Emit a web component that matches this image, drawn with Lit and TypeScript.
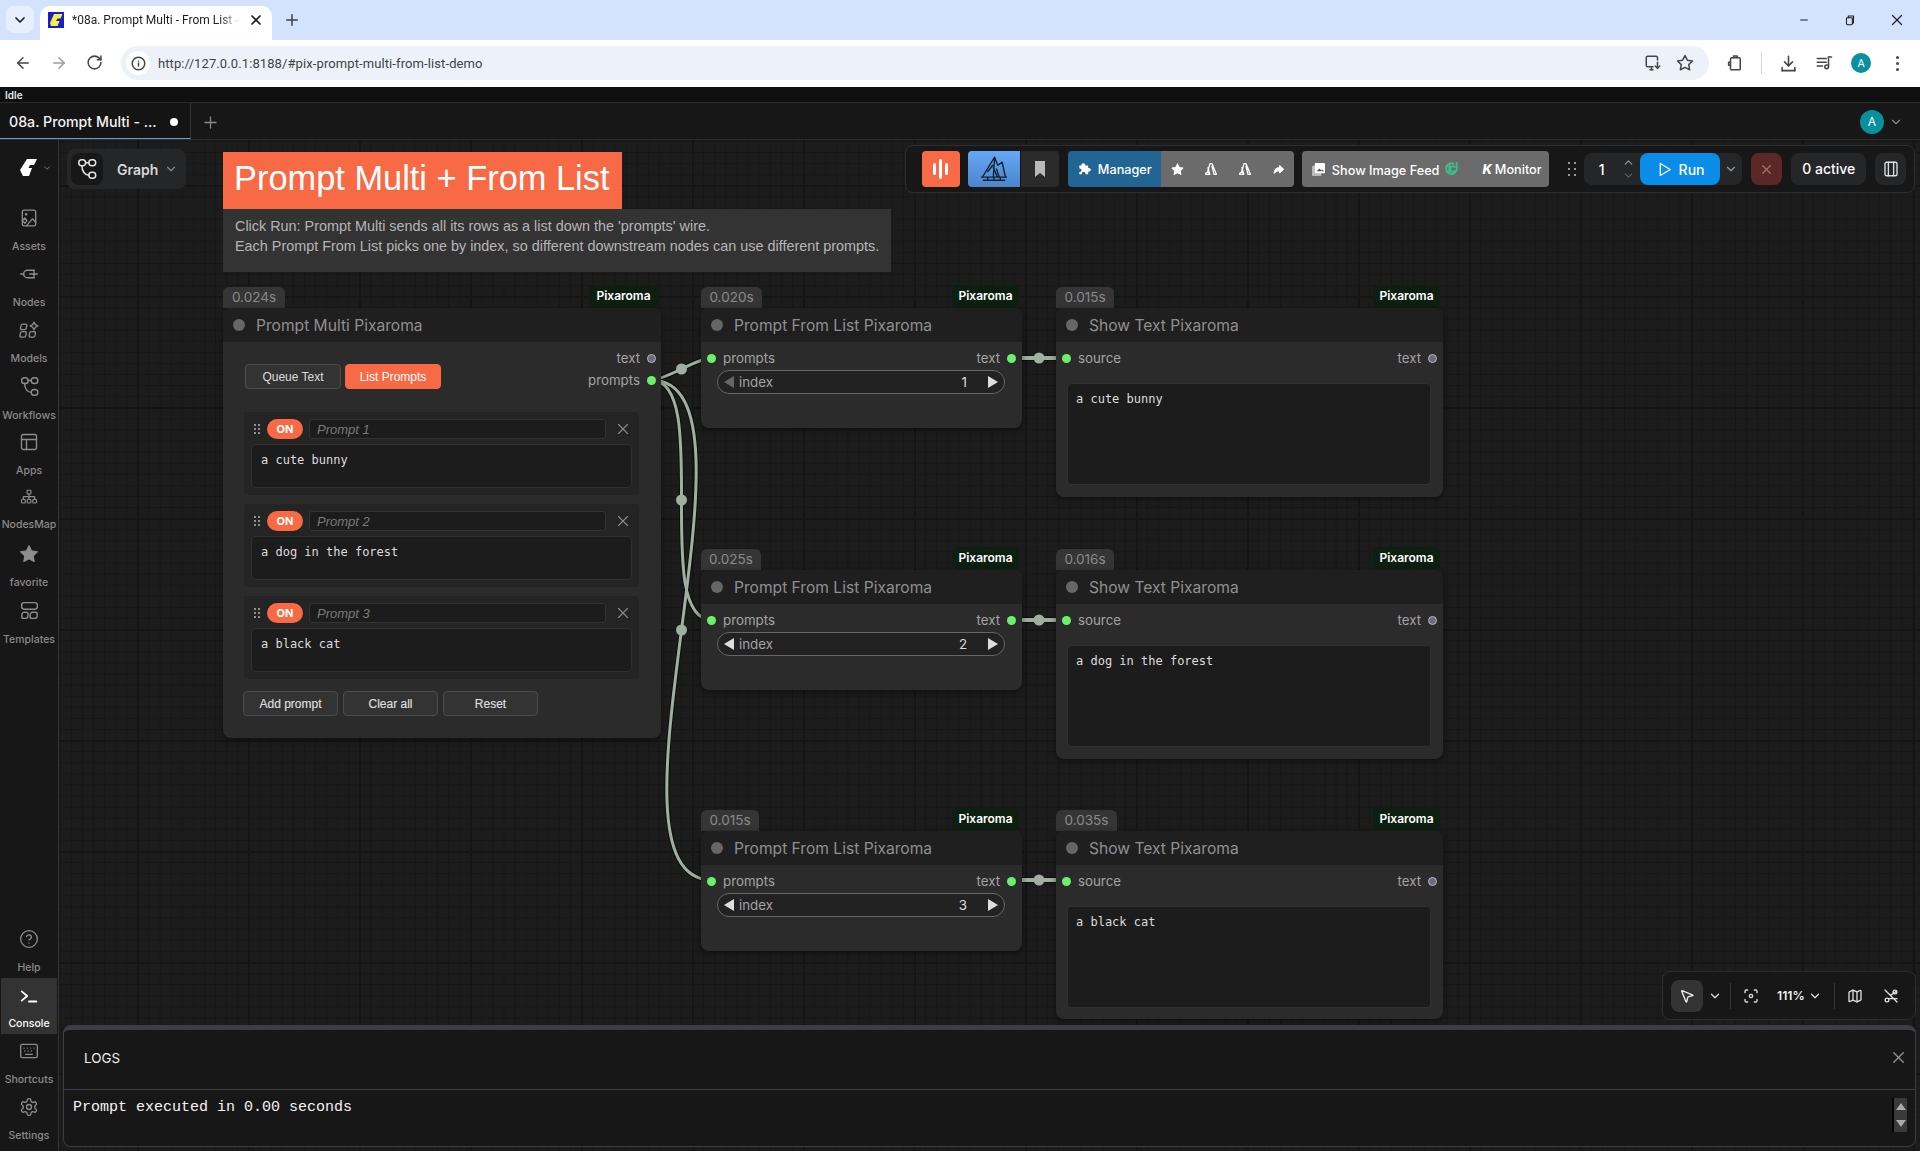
import { LitElement, css, html, svg, type TemplateResult } from 'lit';
import { customElement } from 'lit/decorators.js';

// simple stroke icon, shapes are given in a 24x24 box
function icon(
  body: TemplateResult | string[],
  size = 20,
  color = 'currentColor',
  sw = 2,
  fill = 'none'
): TemplateResult {
  const inner = Array.isArray(body) ? body.map((d) => svg`<path d=${d} />`) : body;
  return html`<svg
    class="ic"
    width=${size}
    height=${size}
    viewBox="0 0 24 24"
    fill=${fill}
    stroke=${color}
    stroke-width=${sw}
    stroke-linecap="round"
    stroke-linejoin="round"
  >
    ${inner}
  </svg>`;
}

const CHEVRON = ['m6 9 6 6 6-6'];
const CROSS = ['M18 6 6 18', 'm6 6 12 12'];
const STAR =
  'M12 2l3.09 6.26L22 9.27l-5 4.87 1.18 6.88L12 17.77l-6.18 3.25L7 14.14 2 9.27l6.91-1.01L12 2z';
const GEAR =
  'M12.22 2h-.44a2 2 0 0 0-2 2v.18a2 2 0 0 1-1 1.73l-.43.25a2 2 0 0 1-2 0l-.15-.08a2 2 0 0 0-2.73.73l-.22.38a2 2 0 0 0 .73 2.73l.15.1a2 2 0 0 1 1 1.72v.51a2 2 0 0 1-1 1.74l-.15.09a2 2 0 0 0-.73 2.73l.22.38a2 2 0 0 0 2.73.73l.15-.08a2 2 0 0 1 2 0l.43.25a2 2 0 0 1 1 1.73V20a2 2 0 0 0 2 2h.44a2 2 0 0 0 2-2v-.18a2 2 0 0 1 1-1.73l.43-.25a2 2 0 0 1 2 0l.15.08a2 2 0 0 0 2.73-.73l.22-.39a2 2 0 0 0-.73-2.73l-.15-.08a2 2 0 0 1-1-1.74v-.5a2 2 0 0 1 1-1.74l.15-.09a2 2 0 0 0 .73-2.73l-.22-.38a2 2 0 0 0-2.73-.73l-.15.08a2 2 0 0 1-2 0l-.43-.25a2 2 0 0 1-1-1.73V4a2 2 0 0 0-2-2z';
const MAP_PATHS = [
  'M14.106 5.553a2 2 0 0 0 1.788 0l3.659-1.83A1 1 0 0 1 21 4.619v12.764a1 1 0 0 1-.553.894l-4.553 2.277a2 2 0 0 1-1.788 0l-4.212-2.106a2 2 0 0 0-1.788 0l-3.659 1.83A1 1 0 0 1 3 19.381V6.618a1 1 0 0 1 .553-.894l4.553-2.277a2 2 0 0 1 1.788 0z',
  'M15 5.764v15',
  'M9 3.236v15',
];
const WORKFLOW = svg`<rect x="3" y="2" width="7.5" height="6.5" rx="3.2" /><rect x="14" y="2" width="7.5" height="6.5" rx="3.2" /><rect x="14" y="15.5" width="7.5" height="6.5" rx="3.2" /><path d="M6.5 8.5c0 6 3 10.2 7.5 10.2M10.5 5.2H14" />`;
// arch glyph of the grey toolbar buttons, loop at the bottom left
const ARCH = svg`<path d="M7 16 10.500 4h3l6.500 16h-3.500L13.500 8M4 20a3 3 0 1 1 6 0z" /><path d="M7.500 10l2.500 10" />`;

const sideTop: [string, TemplateResult][] = [
  [
    'Assets',
    icon(
      svg`<rect x="4" y="2.5" width="16" height="19" rx="2" /><path d="M9 21.5 16 13l4 4" /><circle cx="8.5" cy="7.5" r=".8" /><path d="M7 12l2.5 3.2L7 18.5l-3-3.3z" fill="#1a1a1a" />`,
      20,
      '#8d8d8d',
      1.6
    ),
  ],
  ['Nodes', icon(['M2 12h4', 'M18 12h4', 'M18 7.5h-8a4.5 4.5 0 0 0 0 9h8', 'M18 7.5v9', 'M13 12h5'], 20, '#8d8d8d', 1.6)],
  [
    'Models',
    icon(
      svg`<rect x="3.5" y="5" width="7" height="6.5" rx="1.8" transform="skewX(-10)" /><rect x="4.5" y="14" width="7" height="6.5" rx="1.8" transform="skewX(-10)" /><rect x="15.5" y="14" width="7" height="6.5" rx="1.8" transform="skewX(-10)" /><path d="M18 2.5l1.6 3 3 1.6-3 1.6-1.6 3-1.6-3-3-1.6 3-1.6z" />`,
      20,
      '#8d8d8d',
      1.6
    ),
  ],
  ['Workflows', icon(WORKFLOW, 21, '#8d8d8d', 1.6)],
  ['Apps', icon(svg`<rect x="3" y="3" width="18" height="18" rx="2" /><path d="M3 9h18M9 21V9" />`, 20, '#8d8d8d', 1.6)],
  [
    'NodesMap',
    icon(
      svg`<rect x="9.5" y="3" width="5" height="5" rx="1" /><rect x="2" y="15" width="5" height="5" rx="1.5" /><rect x="9.5" y="15" width="5" height="5" rx="1.5" /><rect x="17" y="15" width="5" height="5" rx="1.5" /><path d="M12 8v7M4.5 15v-3.5h15V15" />`,
      18,
      '#8d8d8d',
      1.6
    ),
  ],
  ['favorite', icon([STAR], 20, '#8d8d8d', 1.4, '#8d8d8d')],
  [
    'Templates',
    icon(
      svg`<rect x="3" y="3" width="18" height="7.5" rx="3" /><rect x="3.5" y="14" width="7" height="7" rx="2.5" transform="skewX(-6) translate(1.6)" /><rect x="13" y="14" width="8" height="7" rx="2.5" transform="skewX(-6) translate(1.6)" />`,
      21,
      '#8d8d8d',
      1.6
    ),
  ],
];

const sideBottom: [string, TemplateResult, boolean][] = [
  [
    'Help',
    icon(svg`<circle cx="12" cy="12" r="10" /><path d="M9.09 9a3 3 0 0 1 5.83 1c0 2-3 3-3 3M12 17h.01" />`, 20, '#8d8d8d', 1.6),
    false,
  ],
  ['Console', icon(['m4 17 6-5-6-5', 'M12 18h8'], 22, '#ffffff', 2), true],
  [
    'Shortcuts',
    icon(
      svg`<rect x="2" y="4" width="20" height="16" rx="2" /><path d="M6 8.5h.01M10 8.5h.01M14 8.5h.01M18 8.5h.01M7 12h.01M11 12h.01M15 12h.01M8 16h8" />`,
      20,
      '#8d8d8d',
      1.6
    ),
    false,
  ],
  ['Settings', icon(svg`<path d=${GEAR} /><circle cx="12" cy="12" r="3" />`, 20, '#8d8d8d', 1.6), false],
];

const promptRows = [
  ['Prompt 1', 'a cute bunny'],
  ['Prompt 2', 'a dog in the forest'],
  ['Prompt 3', 'a black cat'],
];

// top of each row of nodes, in page pixels
const graphRows = [
  { top: 308, left: '0.020s', right: '0.015s', index: 1, text: 'a cute bunny' },
  { top: 570, left: '0.025s', right: '0.016s', index: 2, text: 'a dog in the forest' },
  { top: 831, left: '0.015s', right: '0.035s', index: 3, text: 'a black cat' },
];

const OUT = [651, 380];
const wires = [
  [712, 358],
  [712, 620],
  [712, 880],
];

function spline(x0: number, y0: number, x1: number, y1: number) {
  const dist = Math.hypot(x1 - x0, y1 - y0) * 0.25;
  const c = [x0 + dist, y0, x1 - dist, y1];
  const mid = [(x0 + 3 * c[0] + 3 * c[2] + x1) / 8, (y0 + 3 * c[1] + 3 * c[3] + y1) / 8];
  return { d: `M${x0} ${y0}C${c[0]} ${c[1]} ${c[2]} ${c[3]} ${x1} ${y1}`, mid };
}

const place = (x: number, y: number, w: number, h: number) =>
  `left:${x - 59}px;top:${y - 140}px;width:${w}px;height:${h}px`;

@customElement('app-root')
export class AppRoot extends LitElement {
  private renderChrome() {
    return html`
      <div class="tabstrip">
        <div class="tab-menu">${icon(CHEVRON, 16, '#1f1f1f', 2.6)}</div>
        <div class="tab">
          <svg width="16" height="16" viewBox="0 0 16 16">
            <rect width="16" height="16" fill="#1520c8" />
            <path d="M6 2h8.500l-2 4.500H9.500L8 9h3.500l-2 5H3L2 11z" fill="#f4f23a" />
          </svg>
          <span class="tab-title">*08a. Prompt Multi - From List -</span>
          ${icon(CROSS, 16, '#1f1f1f', 2.6)}
        </div>
        <div class="newtab">${icon(['M5 12h14', 'M12 5v14'], 18, '#3c4043', 2)}</div>
        <div class="winbtns">
          ${icon(['M7 12h10'], 16, '#1f1f1f', 1.6)}
          ${icon(svg`<rect x="6" y="8" width="10" height="12" rx="1.5" /><path d="M9 8V5h9v12h-2" />`, 14, '#1f1f1f', 1.8)}
          ${icon(CROSS, 18, '#1f1f1f', 1.6)}
        </div>
      </div>
      <div class="navbar">
        <div class="navbtns">
          ${icon(['m12 19-7-7 7-7', 'M19 12H5'], 18, '#444746', 2)}
          ${icon(['M5 12h14', 'm12 5 7 7-7 7'], 18, '#9b9d9f', 2)}
          ${icon(['M21 12a9 9 0 1 1-9-9c2.52 0 4.93 1 6.74 2.74L21 8', 'M21 3v5h-5'], 17, '#444746', 2.2)}
        </div>
        <div class="address">
          <span class="info">
            ${icon(svg`<circle cx="12" cy="12" r="10" /><path d="M12 16v-5M12 8h.01" />`, 15, '#444746', 2.4)}
          </span>
          <span class="url">http://127.0.0.1:8188/#pix-prompt-multi-from-list-demo</span>
          <span class="grow"></span>
          ${icon(['M12 17H5a2 2 0 0 1-2-2V5a2 2 0 0 1 2-2h11a2 2 0 0 1 2 2v3', 'M8 21h4', 'M10 17v4', 'M18 11v8', 'm15 16 3 3 3-3'], 18, '#444746', 2)}
          <span class="addr-star">${icon([STAR], 18, '#444746', 2)}</span>
        </div>
        <div class="navicons">
          <span class="ext">${icon(svg`<rect x="6" y="5" width="13" height="16" rx="1.5" /><path d="M10 5V2.5h5V5M6 11H3.5v4H6" />`, 18, '#444746', 2)}</span>
          <span class="navsep"></span>
          ${icon(['M12 3v12', 'm7 10 5 5 5-5', 'M4 21h16', 'M4 17v4', 'M20 17v4'], 19, '#444746', 2)}
          <span class="media">${icon(['M3 6h12', 'M3 11h12', 'M3 16h7', 'M18 4v13', 'M18 4h4', 'M18 17a2.5 2.5 0 1 1-2.5-2.5H18'], 18, '#444746', 2)}</span>
          <span class="chrome-avatar">A</span>
          <span class="kebab"><i></i><i></i><i></i></span>
        </div>
      </div>
    `;
  }

  private renderToolbar() {
    return html`
      <div class="toolbar">
        <div class="tb-orange"><i></i><i></i><i></i></div>
        <div class="tb-pair">
          <div class="tb-blue">
            ${icon(
              svg`<path d="M3 18 12.500 2.500l-1 15.500M12.500 2.500 15 9l3.500-2.500L21 18M7 14l4-5M11.500 11l3 7M14 12l2 6M2 18.500h20M3.500 21h17M7 18.500V21M12 18.500V21M17 18.500V21" />`,
              30,
              '#10202f',
              1.1
            )}
          </div>
          <div class="tb-mark">
            <svg width="12" height="16" viewBox="0 0 12 16"><path d="M1 0h10v16l-5-4-5 4z" fill="#b8b8b8" /></svg>
          </div>
        </div>
        <div class="tb-group">
          <div class="tb-manager">
            <svg width="14" height="14" viewBox="0 0 16 16">
              <path
                d="M6 1.500c1.400 0 2.400 1 2.200 2.400h3.400v3c1.500-.5 3 .5 3 2s-1.500 2.500-3 2v3H8.500c.5-1.500-.5-2.900-2-2.900s-2.500 1.400-2 2.900H1.500V11.300c1.400.4 2.500-.6 2.500-1.900S2.900 7 1.500 7.400V3.900h2.500C3.700 2.500 4.700 1.500 6 1.500z"
                fill="#fff"
              />
            </svg>
            <span>Manager</span>
          </div>
          <div class="tb-grey">
            ${icon([STAR], 13, '#fff', 2, '#fff')} ${icon(ARCH, 16, '#fff', 2)} ${icon(ARCH, 16, '#fff', 2)}
            ${icon(['M14 5l7 6.500-7 6.500v-4c-5 0-8 1.500-10 5 .5-6 4-10 10-10.500z'], 13, '#fff', 2, '#fff')}
          </div>
        </div>
        <div class="tb-feed">
          <svg width="13" height="13" viewBox="0 0 14 14">
            <rect x="0" y="3" width="10" height="11" rx="1" fill="#bbb" />
            <rect x="3" y="0" width="11" height="11" rx="1" fill="#fff" />
            <path d="M5 9l3-3 2 2 1-1 2 2z" fill="#555" />
          </svg>
          <span class="feed-label">Show Image Feed</span>
          ${icon(['M14 4a8 8 0 1 0 5 9V3', 'M16 9a4 4 0 1 0 0 6', 'M8 6v10'], 16, '#3dbd8d', 3)}
          <span class="feed-gap"></span>
          <span class="feed-k">K</span><span class="feed-mon">Monitor</span>
        </div>
        <div class="tb-drag">${[0, 1, 2, 3, 4, 5].map(() => html`<i></i>`)}</div>
        <div class="tb-counter">
          <span class="count">1</span>
          <span class="count-arrows">
            ${icon(['m6 15 6-6 6 6'], 13, '#9a9a9a', 2)} ${icon(CHEVRON, 13, '#5e5e5e', 2)}
          </span>
          <div class="tb-run">${icon(['M6 3.500l14 8.500-14 8.500z'], 17, '#fff', 1.8)}<span>Run</span></div>
          <span class="run-more">${icon(CHEVRON, 14, '#9a9a9a', 2)}</span>
        </div>
        <div class="tb-stop">${icon(CROSS, 15, '#a07070', 2)}</div>
        <div class="tb-active">0 active</div>
        <div class="tb-panel">${icon(svg`<rect x="4" y="3" width="16" height="18" rx="2" /><path d="M8.500 3v18M15.500 3v18" />`, 18, '#ddd', 1.8)}</div>
      </div>
    `;
  }

  private renderTiming(x: number, y: number, w: number, label: string) {
    return html`<div class="timing" style=${place(x, y, w, 21)}>${label}</div>`;
  }

  private renderBadge(x: number, y: number, w: number) {
    return html`<div class="badge" style=${place(x, y, w, 22)}>Pixaroma</div>`;
  }

  private renderMultiNode() {
    return html`
      ${this.renderTiming(223, 287, 62, '0.024s')} ${this.renderBadge(589, 285, 69)}
      <div class="node" style=${place(223, 308, 438, 430)}>
        <div class="node-head"><i class="state"></i><span>Prompt Multi Pixaroma</span></div>
        <div class="multi-top">
          <div class="seg">
            <button class="seg-btn">Queue Text</button>
            <button class="seg-btn on">List Prompts</button>
          </div>
          <div class="outs">
            <div class="slot end"><span>text</span><i class="dot idle"></i></div>
            <div class="slot end"><span>prompts</span><i class="dot live"></i></div>
          </div>
        </div>
        <div class="cards">
          ${promptRows.map(
            ([name, text]) => html`
              <div class="card">
                <div class="card-row">
                  <span class="grip">${[0, 1, 2, 3, 4, 5].map(() => html`<i></i>`)}</span>
                  <span class="pill">ON</span>
                  <span class="name">${name}</span>
                  <span class="del">${icon(CROSS, 18, '#8c8c8c', 1.5)}</span>
                </div>
                <div class="area small">${text}</div>
              </div>
            `
          )}
        </div>
        <div class="actions">
          <button class="act">Add prompt</button>
          <button class="act">Clear all</button>
          <button class="act">Reset</button>
        </div>
      </div>
    `;
  }

  private renderRow(row: (typeof graphRows)[number], i: number) {
    const lw = [61, 60, 58][i];
    const rw = [58, 58, 61][i];
    return html`
      ${this.renderTiming(701, row.top - 21, lw, row.left)} ${this.renderBadge(952, row.top - 23, 67)}
      <div class="node" style=${place(701, row.top, 321, 120)}>
        <div class="node-head"><i class="state"></i><span>Prompt From List Pixaroma</span></div>
        <div class="slots">
          <div class="slot"><i class="dot live"></i><span>prompts</span></div>
          <div class="slot end"><span>text</span><i class="dot live"></i></div>
        </div>
        <div class="stepper">
          <i class="tri left ${row.index === 1 ? 'dim' : ''}"></i>
          <span class="st-label">index</span>
          <span class="st-val">${row.index}</span>
          <i class="tri right"></i>
        </div>
      </div>
      ${this.renderTiming(1056, row.top - 21, rw, row.right)} ${this.renderBadge(1373, row.top - 23, 67)}
      <div class="node" style=${place(1056, row.top, 387, i === 2 ? 188 : 189)}>
        <div class="node-head"><i class="state"></i><span>Show Text Pixaroma</span></div>
        <div class="slots">
          <div class="slot"><i class="dot live"></i><span>source</span></div>
          <div class="slot end"><span>text</span><i class="dot idle"></i></div>
        </div>
        <div class="area big">${row.text}</div>
      </div>
    `;
  }

  private renderWires() {
    const curves = wires.map(([x, y]) => spline(OUT[0], OUT[1], x, y));
    const links = [358, 620, 880];
    return html`<svg class="wires" width="1861" height="1011" viewBox="59 140 1861 1011" fill="none">
      ${curves.map((c) => svg`<path d=${c.d} stroke="#000" stroke-opacity=".5" stroke-width="5" />`)}
      ${curves.map((c) => svg`<path d=${c.d} stroke="#9fb0a0" stroke-width="3" />`)}
      ${curves.map((c) => svg`<circle cx=${c.mid[0]} cy=${c.mid[1]} r="5.500" fill="#9fb0a0" />`)}
      ${links.map(
        (y) => svg`<path d="M1012 ${y}H1066" stroke="#000" stroke-opacity=".5" stroke-width="6" />
          <path d="M1012 ${y}H1066" stroke="#9fb0a0" stroke-width="4" />
          <circle cx="1039" cy=${y} r="5.500" fill="#9fb0a0" />`
      )}
    </svg>`;
  }

  render(): TemplateResult {
    return html`
      ${this.renderChrome()}
      <div class="status">Idle</div>
      <div class="tabs">
        <div class="wf-tab"><span>08a. Prompt Multi - ...</span><i></i></div>
        <div class="wf-add">${icon(['M5 12h14', 'M12 5v14'], 19, '#8a8a8a', 1.6)}</div>
        <span class="grow"></span>
        <span class="wf-avatar">A</span>
        <span class="wf-chev">${icon(CHEVRON, 14, '#8a8a8a', 2)}</span>
        <span class="wf-end"></span>
      </div>
      <div class="main">
        <aside class="sidebar">
          <div class="logo">
            <svg width="17" height="18" viewBox="0 0 17 18"><path d="M7 0h10l-3 6h-4L8.500 9H12l-3 8H3L0 11z" fill="#fff" /></svg>
            ${icon(CHEVRON, 10, '#8a8a8a', 2)}
          </div>
          ${sideTop.map(([label, ic]) => html`<div class="side-item">${ic}<span>${label}</span></div>`)}
          <span class="grow"></span>
          ${sideBottom.map(
            ([label, ic, active]) =>
              html`<div class="side-item ${active ? 'active' : ''}">${ic}<span>${label}</span></div>`
          )}
        </aside>
        <section class="canvas">
          ${this.renderWires()}
          <div class="note-title" style=${place(223, 152, 399, 57)}>Prompt Multi + From List</div>
          <div class="note-body" style=${place(223, 209, 668, 63)}>
            Click Run: Prompt Multi sends all its rows as a list down the 'prompts' wire.<br />
            Each Prompt From List picks one by index, so different downstream nodes can use different prompts.
          </div>
          ${this.renderMultiNode()} ${graphRows.map((r, i) => this.renderRow(r, i))}
          <div class="graph-btn">
            <span class="graph-ic">${icon(WORKFLOW, 22, '#e6e6e6', 1.6)}</span>
            <span class="graph-label">Graph</span>
            ${icon(CHEVRON, 14, '#8a8a8a', 2)}
          </div>
          ${this.renderToolbar()}
          <div class="zoombar">
            <span class="pointer">${icon(['M4.037 4.688a.495.495 0 0 1 .651-.651l16 6.500a.5.5 0 0 1-.063.947l-6.124 1.580a2 2 0 0 0-1.438 1.435l-1.579 6.126a.5.5 0 0 1-.947.063z'], 16, '#eee', 2)}</span>
            <span class="zb-chev">${icon(CHEVRON, 14, '#ddd', 2.2)}</span>
            <i class="zb-sep"></i>
            <span class="zb-focus">${icon(svg`<path d="M3 7V5a2 2 0 0 1 2-2h2M17 3h2a2 2 0 0 1 2 2v2M21 17v2a2 2 0 0 1-2 2h-2M7 21H5a2 2 0 0 1-2-2v-2" /><circle cx="12" cy="12" r="2.500" />`, 16, '#ddd', 2)}</span>
            <span class="zb-pct">111%</span>
            <span class="zb-chev2">${icon(CHEVRON, 14, '#ddd', 2.2)}</span>
            <i class="zb-sep"></i>
            <span class="zb-map">${icon(MAP_PATHS, 16, '#ddd', 2)}</span>
            <span class="zb-cut">${icon(svg`<path d="M3 3l18 18M8 16h13M11 11l9-6" /><circle cx="6" cy="18" r="2.800" /><circle cx="18" cy="6" r="2.800" />`, 16, '#ddd', 2)}</span>
          </div>
          <div class="logs">
            <div class="logs-head">
              <span>LOGS</span>
              <span class="logs-close">${icon(CROSS, 19, '#8e8e8e', 1.8)}</span>
            </div>
            <div class="logs-body">
              <span class="log-line">Prompt executed in 0.00 seconds</span>
              <div class="log-scroll"><i class="up"></i><i class="down"></i></div>
            </div>
          </div>
        </section>
      </div>
    `;
  }

  static styles = css`
    :host {
      display: flex;
      flex-direction: column;
      width: 1920px;
      height: 1151px;
      overflow: hidden;
      background: #171717;
      font-family: Inter, 'Liberation Sans', sans-serif;
      color: #ddd;
    }
    .ic {
      display: block;
      flex: none;
    }
    .grow {
      flex: 1;
    }

    /* browser */
    .tabstrip {
      height: 40px;
      flex: none;
      display: flex;
      align-items: flex-end;
      background: #d3e3fd;
      font-family: Roboto, 'Liberation Sans', sans-serif;
    }
    .tab-menu {
      width: 28px;
      height: 27px;
      margin: 0 6px 7px;
      border-radius: 8px;
      background: #e8effc;
      display: flex;
      align-items: center;
      justify-content: center;
    }
    .tab {
      width: 232px;
      height: 34px;
      margin-right: 0;
      background: #fff;
      border-radius: 10px 10px 0 0;
      display: flex;
      align-items: center;
      padding: 0 8px 6px;
      box-sizing: border-box;
      gap: 8px;
      color: #1f1f1f;
      font-size: 12px;
    }
    .tab-title {
      flex: 1;
      white-space: nowrap;
      overflow: hidden;
      -webkit-mask-image: linear-gradient(90deg, #000 88%, transparent);
      mask-image: linear-gradient(90deg, #000 88%, transparent);
    }
    .newtab {
      margin: 0 0 11px 11px;
    }
    .winbtns {
      margin-left: auto;
      margin-bottom: 11px;
      display: flex;
      align-items: center;
      gap: 31px;
      padding-right: 14px;
    }
    .navbar {
      height: 47px;
      flex: none;
      box-sizing: border-box;
      padding-bottom: 1px;
      display: flex;
      align-items: center;
      background: #fff;
      font-family: Roboto, 'Liberation Sans', sans-serif;
    }
    .navbtns {
      width: 121px;
      box-sizing: border-box;
      padding-left: 14px;
      display: flex;
      gap: 18px;
    }
    .address {
      width: 1588px;
      height: 34px;
      box-sizing: border-box;
      border-radius: 17px;
      background: #edf2fa;
      display: flex;
      align-items: center;
      padding: 0 15px 0 5px;
    }
    .info {
      width: 24px;
      height: 24px;
      border-radius: 50%;
      background: #fff;
      display: flex;
      align-items: center;
      justify-content: center;
    }
    .url {
      margin-left: 8px;
      font-size: 13px;
      color: #3f4346;
      letter-spacing: 0.1px;
    }
    .addr-star {
      margin-left: 14px;
    }
    .navicons {
      flex: 1;
      display: flex;
      align-items: center;
      padding-left: 17px;
    }
    .navsep {
      width: 1px;
      height: 22px;
      background: #c7d6ef;
      margin: 0 17px 0 17px;
    }
    .media {
      margin-left: 17px;
    }
    .chrome-avatar {
      width: 20px;
      height: 20px;
      border-radius: 50%;
      margin-left: 18px;
      background: #0a8f9e;
      color: #fff;
      font-size: 11px;
      display: flex;
      align-items: center;
      justify-content: center;
    }
    .kebab {
      display: flex;
      flex-direction: column;
      gap: 3px;
      margin-left: 25px;
    }
    .kebab i {
      width: 3px;
      height: 3px;
      border-radius: 50%;
      background: #444746;
    }

    /* app bars */
    .status {
      height: 15px;
      flex: none;
      background: #0f0f0f;
      color: #e8e8e8;
      font-size: 10px;
      font-weight: 600;
      line-height: 17px;
      padding-left: 5px;
      border-bottom: 1px solid #2a2a2a;
      box-sizing: content-box;
    }
    .tabs {
      height: 36px;
      flex: none;
      display: flex;
      align-items: center;
      background: #171717;
      border-bottom: 1px solid #2c2c2c;
    }
    .wf-tab {
      width: 191px;
      height: 36px;
      box-sizing: border-box;
      padding: 2px 0 0 9px;
      display: flex;
      align-items: center;
      border-bottom: 1px solid #5f9fd8;
      border-right: 1px solid #333;
      background: #141414;
      color: #f2f2f2;
      font-size: 14.200px;
      font-weight: 500;
    }
    .wf-tab span {
      flex: 1;
      white-space: nowrap;
    }
    .wf-tab i {
      width: 8px;
      height: 8px;
      border-radius: 50%;
      background: #fff;
      margin-right: 12px;
    }
    .wf-add {
      margin: 2px 0 0 10px;
    }
    .wf-avatar {
      width: 24px;
      height: 24px;
      border-radius: 50%;
      background: #0a8f9e;
      color: #fff;
      font-size: 12px;
      display: flex;
      align-items: center;
      justify-content: center;
      margin: 1px 5px 0 0;
    }
    .wf-chev {
      margin-top: 1px;
    }
    .wf-end {
      width: 17px;
    }
    .main {
      flex: 1;
      display: flex;
      min-height: 0;
    }
    .sidebar {
      width: 58px;
      flex: none;
      display: flex;
      flex-direction: column;
      align-items: stretch;
      background: #171717;
      border-right: 1px solid #333;
      padding-bottom: 5px;
      box-sizing: content-box;
      height: 1006px;
    }
    .logo {
      height: 61px;
      flex: none;
      display: flex;
      align-items: center;
      justify-content: center;
      gap: 5px;
      padding: 0 0 6px 13px;
      box-sizing: border-box;
    }
    .side-item {
      height: 56px;
      flex: none;
      display: flex;
      flex-direction: column;
      align-items: center;
      box-sizing: border-box;
      padding-top: 7px;
      gap: 12px;
      font-size: 10.500px;
      font-weight: 500;
      color: #8a8a8a;
    }
    .side-item.active {
      background: #333;
      color: #fff;
      margin: 0 1px;
      gap: 10px;
    }

    /* graph */
    .canvas {
      flex: 1;
      position: relative;
      overflow: hidden;
      background-color: #1c1c1c;
      background-image: linear-gradient(#151515 2px, transparent 2px),
        linear-gradient(90deg, #151515 2px, transparent 2px), linear-gradient(#171717 1px, transparent 1px),
        linear-gradient(90deg, #171717 1px, transparent 1px);
      background-size: 111px 111px, 111px 111px, 11.100px 11.100px, 11.100px 11.100px;
      background-position: 0 45px, 78px 0, 0 1px, 0.800px 0;
    }
    .wires {
      position: absolute;
      left: 0;
      top: 0;
    }
    .note-title {
      position: absolute;
      box-sizing: border-box;
      background: #f76a45;
      color: #fff;
      font: 34.400px/53px 'Liberation Sans', sans-serif;
      padding-left: 11px;
      white-space: nowrap;
    }
    .note-body {
      position: absolute;
      box-sizing: border-box;
      background: #333;
      color: #b6b6b6;
      font: 14.400px/20px 'Liberation Sans', sans-serif;
      padding: 7px 11px 7px 12px;
      white-space: nowrap;
    }
    .timing {
      position: absolute;
      box-sizing: border-box;
      background: #353535;
      color: #8a8a8a;
      border-radius: 6px 6px 0 0;
      font-size: 13.500px;
      line-height: 20px;
      text-align: center;
    }
    .badge {
      position: absolute;
      box-sizing: border-box;
      background: #0d1f10;
      color: #fff;
      border-radius: 5px;
      font-size: 12px;
      font-weight: 600;
      line-height: 21px;
      text-align: center;
    }
    .node {
      position: absolute;
      box-sizing: border-box;
      background: #2b2b2b;
      border-radius: 8px;
      box-shadow: 0 2px 6px rgba(0, 0, 0, 0.45);
      display: flex;
      flex-direction: column;
    }
    .node-head {
      height: 34px;
      flex: none;
      display: flex;
      align-items: center;
      padding-left: 10px;
      gap: 11px;
      background: #1f1f1f;
      border-radius: 8px 8px 0 0;
      color: #8f8f8f;
      font-size: 15.600px;
    }
    .state {
      width: 12px;
      height: 12px;
      border-radius: 50%;
      background: #666;
    }
    .slots {
      height: 20px;
      flex: none;
      margin-top: 6px;
      display: flex;
      justify-content: space-between;
      padding: 0 6px;
    }
    .slot {
      display: flex;
      align-items: center;
      gap: 7px;
      font-size: 13.300px;
      color: #a3a3a3;
    }
    .slot.end {
      justify-content: flex-end;
    }
    .dot {
      width: 9px;
      height: 9px;
      border-radius: 50%;
      box-sizing: border-box;
      display: block;
    }
    .dot.live {
      background: #6bf06b;
    }
    .dot.idle {
      background: #6c6a80;
      border: 1px solid #b8b8c4;
    }
    .multi-top {
      height: 49px;
      flex: none;
      box-sizing: border-box;
      display: flex;
      justify-content: space-between;
      padding: 5px 5px 0 22px;
    }
    .seg {
      display: flex;
      gap: 4px;
      margin-top: 17px;
      height: 25px;
    }
    .seg-btn {
      width: 96px;
      height: 25px;
      box-sizing: border-box;
      border: 1px solid #4c4c4c;
      border-radius: 4px;
      background: #333;
      color: #ddd;
      font: 12px 'Liberation Sans', sans-serif;
      padding: 0;
    }
    .seg-btn.on {
      background: #f76a45;
      border-color: #f76a45;
      color: #fff;
    }
    .outs .slot {
      height: 22px;
    }
    .cards {
      flex: none;
      margin: 21px 0 0 21px;
      width: 395px;
      display: flex;
      flex-direction: column;
      gap: 9px;
    }
    .card {
      height: 83px;
      box-sizing: border-box;
      padding: 7px;
      background: #242424;
      border-radius: 4px;
    }
    .card-row {
      height: 20px;
      display: flex;
      align-items: center;
      margin-bottom: 5px;
    }
    .grip {
      width: 6px;
      margin-left: 3px;
      display: grid;
      grid-template-columns: 2px 2px;
      gap: 2px;
    }
    .grip i {
      width: 2px;
      height: 2px;
      background: #8f8f8f;
    }
    .pill {
      width: 36px;
      height: 20px;
      margin-left: 7px;
      border-radius: 10px;
      background: #f76a45;
      color: #fff;
      font-size: 11px;
      font-weight: 700;
      text-align: center;
      line-height: 21px;
    }
    .name {
      width: 297px;
      height: 20px;
      box-sizing: border-box;
      margin-left: 6px;
      padding-left: 7px;
      background: #1c1c1c;
      border: 1px solid #333;
      border-radius: 3px;
      color: #7a7a7a;
      font: italic 13px/19px 'Liberation Sans', sans-serif;
    }
    .del {
      margin-left: 8px;
    }
    .area {
      box-sizing: border-box;
      background: #1c1c1c;
      border: 1px solid #303030;
      border-radius: 4px;
      color: #dcdcdc;
      font: 12px/16px 'DejaVu Sans Mono', 'Liberation Mono', monospace;
    }
    .area.small {
      height: 44px;
      padding: 7px 9px;
    }
    .area.big {
      width: 364px;
      height: 102px;
      margin: 15px 0 0 11px;
      padding: 7px 8px;
    }
    .actions {
      display: flex;
      gap: 5px;
      margin: 12px 0 0 20px;
    }
    .act {
      width: 95px;
      height: 25px;
      box-sizing: border-box;
      border: 1px solid #4c4c4c;
      border-radius: 4px;
      background: #333;
      color: #ddd;
      font: 12px 'Liberation Sans', sans-serif;
      -webkit-text-stroke: 0.2px #ddd;
      padding: 0;
    }
    .stepper {
      height: 24px;
      margin: 2px 17px 0 16px;
      box-sizing: border-box;
      border: 1px solid #666;
      border-radius: 12px;
      background: #222;
      display: flex;
      align-items: center;
      padding: 0 6px;
      font-size: 13.300px;
      color: #a3a3a3;
    }
    .tri {
      width: 0;
      height: 0;
      border-top: 6px solid transparent;
      border-bottom: 6px solid transparent;
    }
    .tri.left {
      border-right: 10px solid #ddd;
    }
    .tri.left.dim {
      border-right-color: #666;
    }
    .tri.right {
      border-left: 10px solid #ddd;
    }
    .st-label {
      flex: 1;
      margin-left: 5px;
    }
    .st-val {
      color: #ddd;
      margin-right: 21px;
    }

    .graph-btn {
      position: absolute;
      left: 8px;
      top: 9px;
      width: 119px;
      height: 40px;
      box-sizing: border-box;
      padding: 4px;
      border-radius: 8px;
      background: #252628;
      display: flex;
      align-items: center;
    }
    .graph-ic {
      width: 32px;
      height: 32px;
      border-radius: 8px;
      background: #171717;
      display: flex;
      align-items: center;
      justify-content: center;
    }
    .graph-label {
      margin: 0 6px 0 14px;
      font-size: 14px;
      font-weight: 600;
      color: #d8d8d8;
    }

    /* top right toolbar */
    .toolbar {
      position: absolute;
      right: 5px;
      top: 5px;
      width: 1010px;
      height: 48px;
      box-sizing: border-box;
      padding: 0 8px 0 16px;
      display: flex;
      align-items: center;
      background: #171717;
      border: 1px solid #2e2e2e;
      border-radius: 8px;
      color: #fff;
      font-size: 12.700px;
    }
    .tb-orange {
      width: 38px;
      height: 36px;
      border-radius: 4px;
      background: #f76a45;
      display: flex;
      align-items: center;
      justify-content: center;
      gap: 3px;
    }
    .tb-orange i {
      width: 3px;
      height: 12px;
      border-radius: 2px;
      background: #fff;
    }
    .tb-orange i:nth-child(2) {
      height: 20px;
    }
    .tb-pair {
      display: flex;
      margin-left: 8px;
      height: 36px;
    }
    .tb-blue {
      width: 52px;
      border-radius: 4px 0 0 4px;
      background: linear-gradient(#66a8f6, #4b84cb);
      display: flex;
      align-items: center;
      justify-content: center;
    }
    .tb-mark {
      width: 39px;
      border-radius: 0 4px 4px 0;
      background: #2b2b2b;
      border-left: 1px solid #111;
      box-sizing: border-box;
      display: flex;
      align-items: center;
      justify-content: center;
    }
    .tb-group {
      display: flex;
      margin-left: 9px;
      height: 36px;
    }
    .tb-manager {
      width: 93px;
      border-radius: 4px 0 0 4px;
      background: #226493;
      display: flex;
      align-items: center;
      padding-left: 10px;
      box-sizing: border-box;
      gap: 6px;
      font-weight: 500;
    }
    .tb-grey {
      width: 133px;
      box-sizing: border-box;
      border-radius: 0 4px 4px 0;
      background: #6b6b6b;
      display: flex;
      align-items: center;
      padding: 0 9px 0 10px;
      justify-content: space-between;
    }
    .tb-feed {
      width: 248px;
      height: 36px;
      box-sizing: border-box;
      margin-left: 8px;
      padding-left: 10px;
      border-radius: 4px;
      background: #6b6b6b;
      display: flex;
      align-items: center;
      font-weight: 500;
      white-space: nowrap;
    }
    .feed-label {
      margin: 2px 5px 0 7px;
    }
    .feed-gap {
      width: 22px;
    }
    .feed-k {
      font-style: italic;
      font-weight: 800;
      margin-right: 3px;
    }
    .tb-drag {
      display: grid;
      grid-template-columns: 2px 2px;
      gap: 4px 4px;
      margin: 0 8px 0 19px;
    }
    .tb-drag i {
      width: 2px;
      height: 2px;
      background: #999;
    }
    .tb-counter {
      width: 159px;
      height: 32px;
      display: flex;
      align-items: center;
      background: #252628;
      border-radius: 8px;
    }
    .count {
      width: 35px;
      text-align: center;
      font-size: 14px;
      font-weight: 500;
    }
    .count-arrows {
      width: 18px;
      display: flex;
      flex-direction: column;
      align-items: center;
    }
    .tb-run {
      width: 80px;
      height: 32px;
      margin-left: 3px;
      border-radius: 8px;
      background: #0b8ce9;
      display: flex;
      align-items: center;
      justify-content: center;
      gap: 6px;
      font-size: 14px;
      font-weight: 500;
    }
    .run-more {
      margin-left: 4px;
    }
    .tb-stop {
      width: 31px;
      height: 32px;
      margin-left: 9px;
      border-radius: 8px;
      background: #5c2727;
      display: flex;
      align-items: center;
      justify-content: center;
    }
    .tb-active {
      width: 75px;
      height: 32px;
      margin-left: 9px;
      border-radius: 8px;
      background: #252628;
      text-align: center;
      line-height: 32px;
      font-size: 14px;
      font-weight: 500;
    }
    .tb-panel {
      width: 31px;
      height: 32px;
      margin-left: 9px;
      border-radius: 8px;
      background: #252628;
      display: flex;
      align-items: center;
      justify-content: center;
    }

    /* bottom right */
    .zoombar {
      position: absolute;
      right: 4px;
      top: 831px;
      width: 254px;
      height: 49px;
      box-sizing: border-box;
      display: flex;
      align-items: center;
      padding-left: 8px;
      background: #171717;
      border: 1px solid #2e2e2e;
      border-radius: 8px;
      color: #eee;
      font-size: 12.200px;
      font-weight: 600;
    }
    .pointer {
      width: 32px;
      height: 32px;
      border-radius: 8px;
      background: #333;
      display: flex;
      align-items: center;
      justify-content: center;
    }
    .zb-chev {
      margin: 0 8px 0 5px;
    }
    .zb-sep {
      width: 1px;
      height: 26px;
      background: #333;
    }
    .zb-focus {
      margin: 0 18px 0 12px;
    }
    .zb-pct {
      width: 26px;
      white-space: nowrap;
    }
    .zb-chev2 {
      margin: 0 12px 0 5px;
    }
    .zb-map {
      margin-left: 12px;
    }
    .zb-cut {
      margin-left: 20px;
    }

    .logs {
      position: absolute;
      left: 4px;
      right: 4px;
      top: 885px;
      height: 122px;
      box-sizing: border-box;
      background: #171717;
      border: 1px solid #3d3d42;
      border-top: 5px solid #3d3d42;
      border-radius: 8px 8px 8px 8px;
    }
    .logs-head {
      height: 60px;
      box-sizing: border-box;
      display: flex;
      align-items: center;
      justify-content: space-between;
      padding: 0 7px 4px 20px;
      border-bottom: 1px solid #3d3d42;
      font-size: 13.400px;
      color: #eee;
    }
    .logs-body {
      position: relative;
      padding: 5px 0 0 9px;
    }
    .log-line {
      font: 15px/19px 'Liberation Mono', monospace;
      color: #f4f4f4;
      font-weight: 400;
    }
    .log-scroll {
      position: absolute;
      right: 8px;
      top: 8px;
      width: 15px;
      height: 34px;
      background: #3a3a3a;
      border-left: 2px solid #000;
      display: flex;
      flex-direction: column;
      align-items: center;
      justify-content: space-between;
      padding: 5px 0;
      box-sizing: border-box;
    }
    .log-scroll i {
      width: 0;
      height: 0;
      border-left: 5px solid transparent;
      border-right: 5px solid transparent;
    }
    .log-scroll .up {
      border-bottom: 7px solid #aaa;
    }
    .log-scroll .down {
      border-top: 7px solid #aaa;
    }
  `;
}

declare global {
  interface HTMLElementTagNameMap {
    'app-root': AppRoot;
  }
}
